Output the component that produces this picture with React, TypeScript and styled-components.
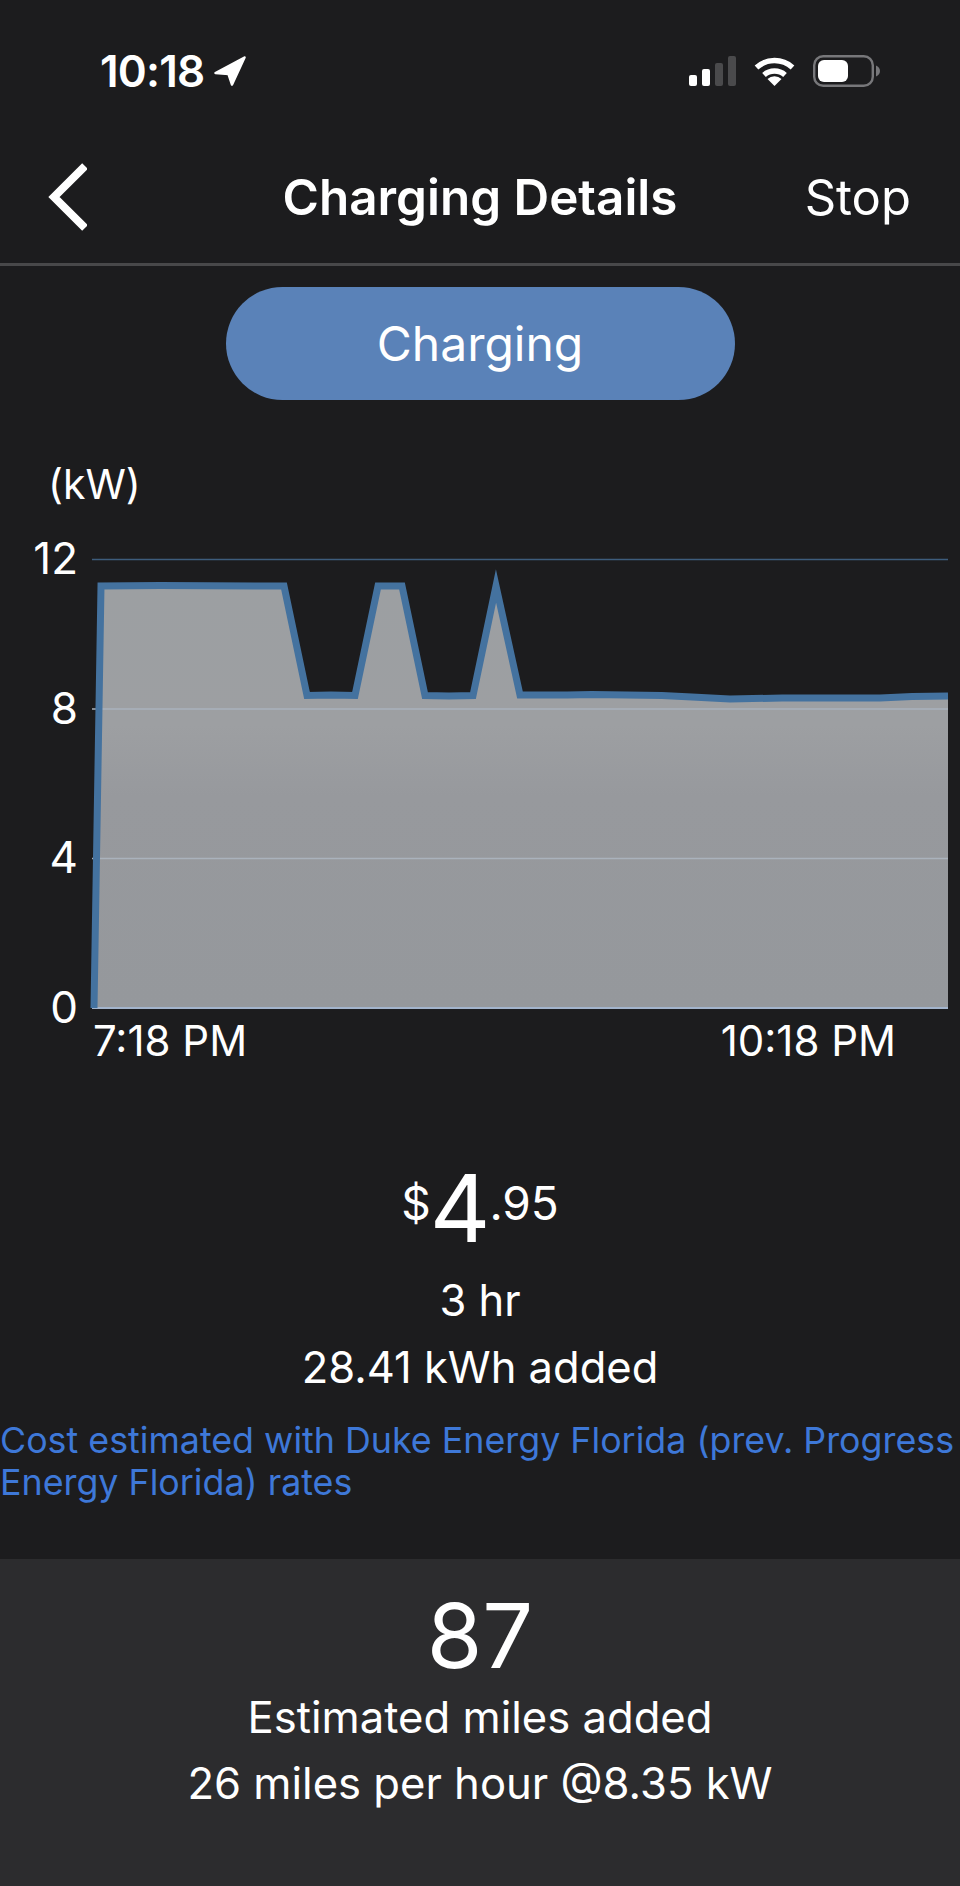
import React from 'react'
import styled, { createGlobalStyle } from 'styled-components'

const GlobalStyle = createGlobalStyle`
  html, body { margin: 0; padding: 0; background: #1c1c1e; }
  body { font-family: Inter, "Liberation Sans", sans-serif; color: #fff; }
`

const Page = styled.div`
  width: 960px;
  min-height: 1886px;
  display: flex;
  flex-direction: column;
  background: #1c1c1e;
`

const StatusBar = styled.div`
  height: 142px;
  box-sizing: border-box;
  padding: 0 80px 0 100px;
  display: flex;
  align-items: center;
`

const Clock = styled.div`
  font-size: 44px;
  font-weight: 600;
  letter-spacing: -0.8px;
  margin-right: 10px;
`

const StatusIcons = styled.div`
  margin-left: auto;
  display: flex;
  align-items: center;
  gap: 18px;
`

const NavBar = styled.div`
  height: 124px;
  box-sizing: border-box;
  padding: 0 49px 11px 49px;
  display: grid;
  grid-template-columns: 1fr auto 1fr;
  align-items: center;
  border-bottom: 3px solid #48484a;
`

const BackButton = styled.div`
  display: flex;
  margin-left: -2px;
`

const Title = styled.div`
  font-size: 49.4px;
  font-weight: 600;
`

const StopLink = styled.div`
  justify-self: end;
  font-size: 49px;
`

const StatusPill = styled.div`
  width: 509px;
  height: 113px;
  margin: 21px auto 0;
  border-radius: 57px;
  background: #5a82b8;
  display: flex;
  align-items: center;
  justify-content: center;
  font-size: 48px;
`

const UnitLabel = styled.div`
  margin-top: 60px;
  padding-left: 48px;
  height: 50px;
  line-height: 48px;
  font-size: 41px;
`

const ChartRow = styled.div`
  margin-top: 49px;
  display: flex;
  gap: 14px;
`

const YAxis = styled.div`
  width: 78px;
  height: 449px;
  margin-top: -1px;
  display: flex;
  flex-direction: column;
  justify-content: space-between;
  align-items: flex-end;
`

const Tick = styled.div`
  height: 0;
  display: flex;
  align-items: center;
  font-size: 44px;
`

const XAxis = styled.div`
  margin-top: 9px;
  padding: 0 64px 0 93px;
  height: 46px;
  display: flex;
  justify-content: space-between;
  align-items: center;
  font-size: 42px;
`

const Summary = styled.div`
  margin-top: 107px;
  display: flex;
  flex-direction: column;
  align-items: center;
`

const Amount = styled.div`
  display: flex;
  align-items: flex-start;
  height: 97px;
`

const AmountSmall = styled.span`
  font-size: 46px;
  line-height: 56px;
  margin-top: 5px;
`

const AmountBig = styled.span`
  font-size: 94px;
  line-height: 96px;
  margin: -10px -1px 0;
`

const SummaryLine = styled.div`
  font-size: 43.5px;
  line-height: 67px;
`

const RatesNote = styled.div`
  margin-top: 18px;
  font-size: 35.8px;
  line-height: 42px;
  color: #3e78d8;
`

const MilesPanel = styled.div`
  margin-top: 56px;
  flex: 1;
  background: #2c2c2e;
  display: flex;
  flex-direction: column;
  align-items: center;
  padding-top: 27px;
`

const MilesValue = styled.div`
  font-size: 90px;
  line-height: 99px;
`

const MilesLine = styled.div`
  font-size: 43.6px;
  line-height: 66px;
`

// power curve, in chart pixels
const curve = [
  [2, 449], [9, 27], [68, 26.5], [192, 27], [215, 136.5], [239, 136], [263, 136.5],
  [286, 27], [310, 27], [333, 136.5], [357, 137], [381, 136.5], [404, 27], [428, 136],
  [475, 136], [500, 135.5], [570, 136.5], [600, 138], [638, 140], [690, 139], [788, 139], [820, 137.5], [856, 137],
]

const linePoints = curve.map(p => p.join(',')).join(' ')
const fillPoints = `${linePoints} 856,449 2,449`

const Chart = () => (
  <svg width="856" height="449" viewBox="0 0 856 449" style={{ overflow: 'visible' }}>
    <defs>
      <linearGradient id="area" x1="0" y1="0" x2="0" y2="1">
        <stop offset="0" stopColor="#9c9fa2" />
        <stop offset="0.33" stopColor="#9d9fa2" />
        <stop offset="0.5" stopColor="#97999d" />
        <stop offset="1" stopColor="#95989c" />
      </linearGradient>
    </defs>
    <polygon points={fillPoints} fill="url(#area)" />
    <line x1="0" y1="0.5" x2="856" y2="0.5" stroke="#3d5c7c" strokeWidth="1.5" />
    <line x1="0" y1="150" x2="856" y2="150" stroke="#aab2bc" strokeWidth="1.5" />
    <line x1="0" y1="299.5" x2="856" y2="299.5" stroke="#aab2bc" strokeWidth="1.5" />
    <line x1="0" y1="449" x2="856" y2="449" stroke="#a3b4cc" strokeWidth="2" />
    <polyline points={linePoints} fill="none" stroke="#44729f" strokeWidth="7" strokeLinejoin="miter" strokeMiterlimit="12" />
  </svg>
)

const LocationArrow = () => (
  <svg width="32" height="30" viewBox="0 0 32 30">
    <path d="M30.5 1.5 L1.5 17 L14.5 18 L18 28.5 Z" fill="#fff" stroke="#fff" strokeWidth="2.5" strokeLinejoin="round" />
  </svg>
)

const SignalIcon = () => (
  <svg width="47" height="30" viewBox="0 0 47 30">
    <rect x="0" y="19" width="8" height="11" rx="2" fill="#fff" />
    <rect x="13" y="13" width="8" height="17" rx="2" fill="#fff" />
    <rect x="26" y="7" width="8" height="23" rx="2" fill="#4a4a4c" />
    <rect x="39" y="0" width="8" height="30" rx="2" fill="#4a4a4c" />
  </svg>
)

const WifiIcon = () => (
  <svg width="41" height="30" viewBox="0 0 41 30">
    <path d="M2.5 11.5 A 27 27 0 0 1 38.5 11.5" fill="none" stroke="#fff" strokeWidth="5.5" />
    <path d="M10 19 A 16 16 0 0 1 31 19" fill="none" stroke="#fff" strokeWidth="5.5" />
    <path d="M20.5 30 L13.5 23 A 10 10 0 0 1 27.5 23 Z" fill="#fff" />
  </svg>
)

const BatteryIcon = () => (
  <svg width="67" height="32" viewBox="0 0 67 32">
    <rect x="1.2" y="1.2" width="58.6" height="29.6" rx="9" fill="none" stroke="#77777a" strokeWidth="2.4" />
    <rect x="5" y="5" width="30" height="22" rx="6" fill="#fff" />
    <path d="M63 10.5 C65.5 11.5 67 13.5 67 16 C67 18.5 65.5 20.5 63 21.5 Z" fill="#77777a" />
  </svg>
)

const BackChevron = () => (
  <svg width="40" height="68" viewBox="0 0 40 68">
    <polyline points="38,3 7,34 38,65" fill="none" stroke="#fff" strokeWidth="8" />
  </svg>
)

export default function App() {
  return (
    <Page>
      <GlobalStyle />
      <StatusBar>
        <Clock>10:18</Clock>
        <LocationArrow />
        <StatusIcons>
          <SignalIcon />
          <WifiIcon />
          <BatteryIcon />
        </StatusIcons>
      </StatusBar>
      <NavBar>
        <BackButton>
          <BackChevron />
        </BackButton>
        <Title>Charging Details</Title>
        <StopLink>Stop</StopLink>
      </NavBar>
      <StatusPill>Charging</StatusPill>
      <UnitLabel>(kW)</UnitLabel>
      <ChartRow>
        <YAxis>
          <Tick>12</Tick>
          <Tick>8</Tick>
          <Tick>4</Tick>
          <Tick>0</Tick>
        </YAxis>
        <Chart />
      </ChartRow>
      <XAxis>
        <span>7:18 PM</span>
        <span>10:18 PM</span>
      </XAxis>
      <Summary>
        <Amount>
          <AmountSmall>$</AmountSmall>
          <AmountBig>4</AmountBig>
          <AmountSmall>.95</AmountSmall>
        </Amount>
        <SummaryLine>3 hr</SummaryLine>
        <SummaryLine>28.41 kWh added</SummaryLine>
      </Summary>
      <RatesNote>Cost estimated with Duke Energy Florida (prev. Progress Energy Florida) rates</RatesNote>
      <MilesPanel>
        <MilesValue>87</MilesValue>
        <MilesLine>Estimated miles added</MilesLine>
        <MilesLine>26 miles per hour @8.35 kW</MilesLine>
      </MilesPanel>
    </Page>
  )
}
